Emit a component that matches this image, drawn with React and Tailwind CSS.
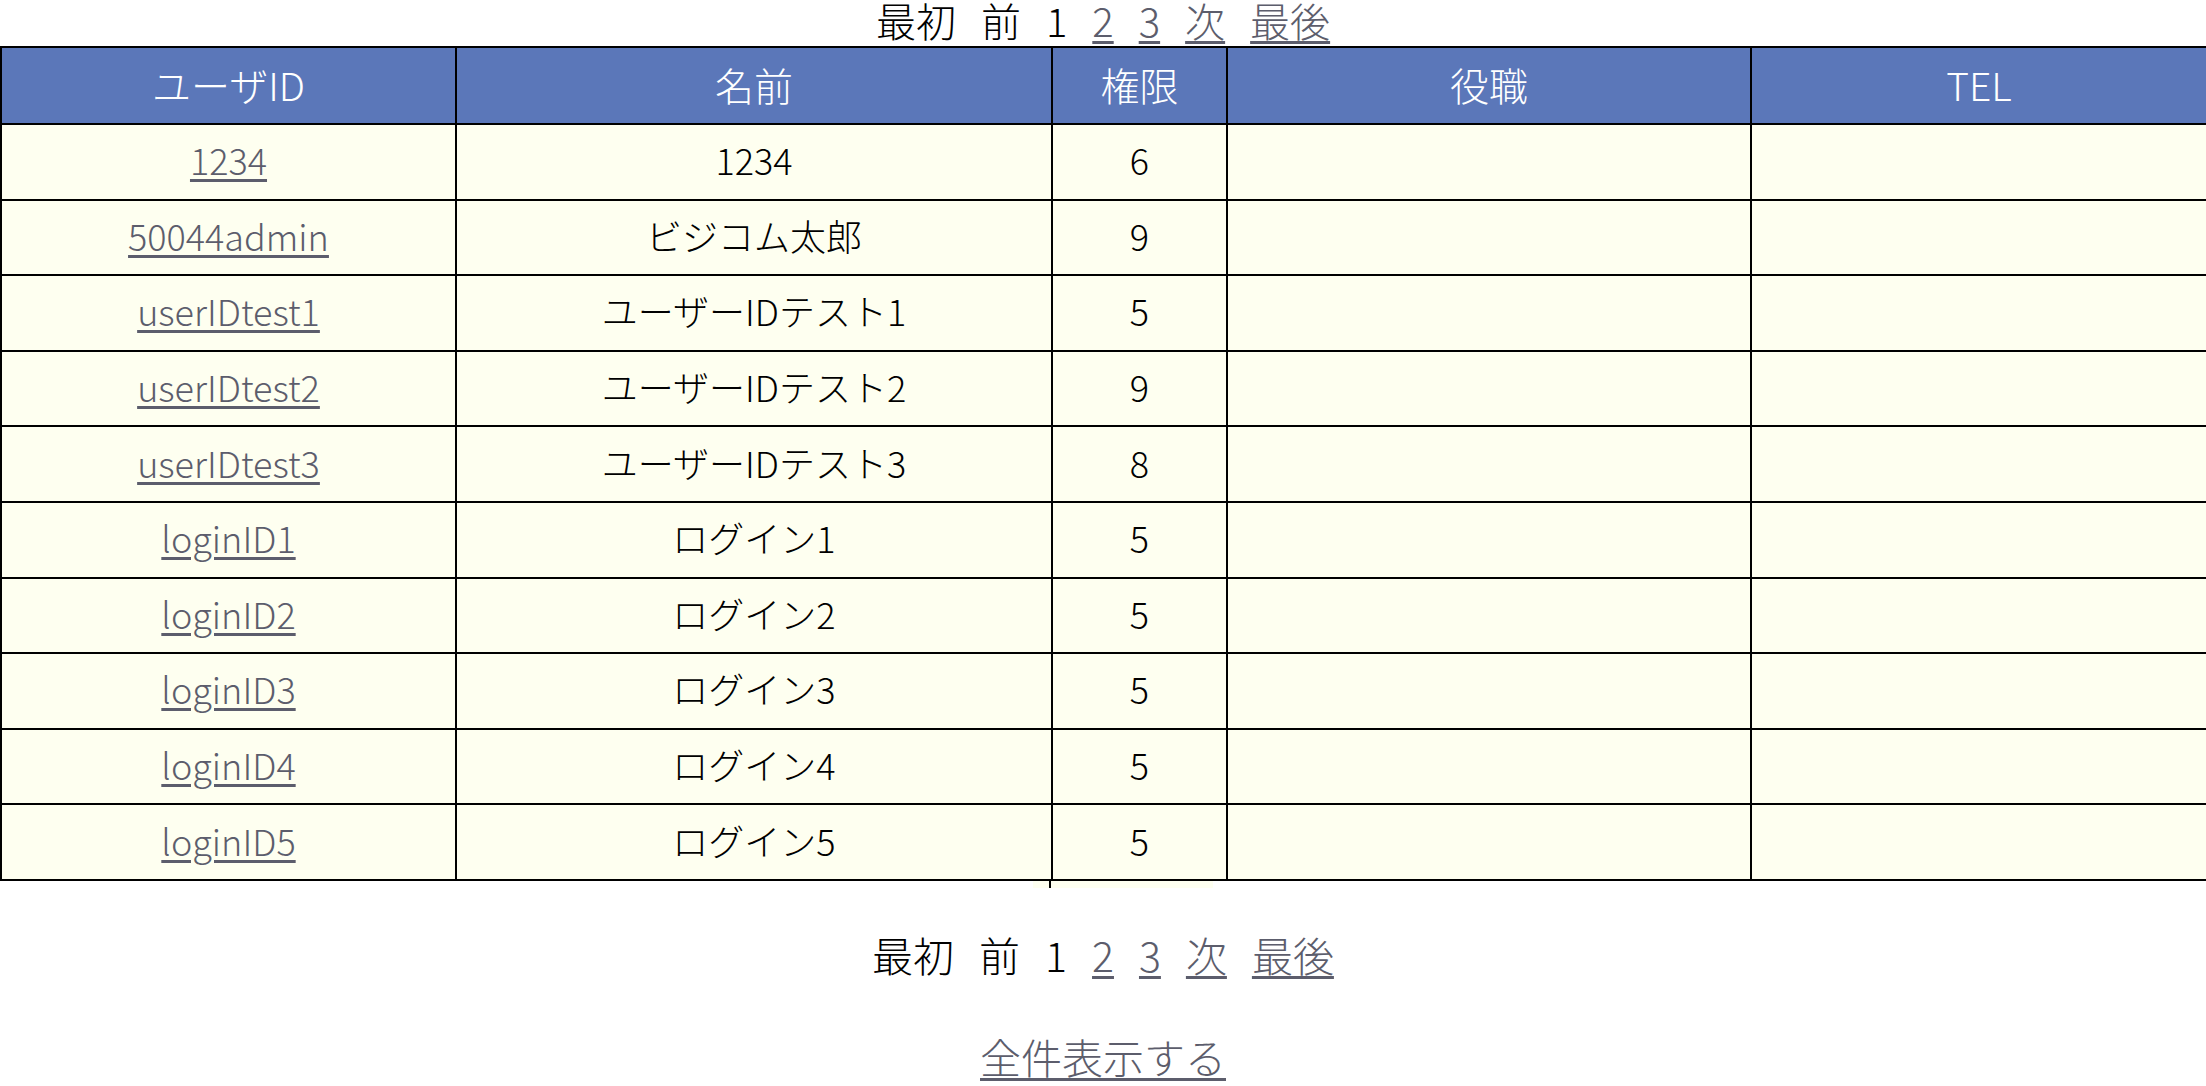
import React from 'react';

const users = [
  { id: '1234', name: '1234', level: '6' },
  { id: '50044admin', name: 'ビジコム太郎', level: '9' },
  { id: 'userIDtest1', name: 'ユーザーIDテスト1', level: '5' },
  { id: 'userIDtest2', name: 'ユーザーIDテスト2', level: '9' },
  { id: 'userIDtest3', name: 'ユーザーIDテスト3', level: '8' },
  { id: 'loginID1', name: 'ログイン1', level: '5' },
  { id: 'loginID2', name: 'ログイン2', level: '5' },
  { id: 'loginID3', name: 'ログイン3', level: '5' },
  { id: 'loginID4', name: 'ログイン4', level: '5' },
  { id: 'loginID5', name: 'ログイン5', level: '5' },
];

const link = 'text-[#5c5d6c] underline decoration-[3px] underline-offset-[4px]';

function Pager({ className }) {
  return (
    <div className={`flex justify-center items-center gap-[25px] text-black ${className}`}>
      <span>最初</span>
      <span>前</span>
      <span>1</span>
      <a href="#" className={link}>2</a>
      <a href="#" className={link}>3</a>
      <a href="#" className={link}>次</a>
      <a href="#" className={link}>最後</a>
    </div>
  );
}

export default function App() {
  return (
    <div className="w-[2206px] bg-white font-['Noto_Sans_CJK_JP','Noto_Sans',sans-serif] font-light">
      <div className="h-[46px]">
        <Pager className="text-[40px] leading-[40px]" />
      </div>

      <table className="w-full border-collapse table-fixed">
        <colgroup>
          <col className="w-[455px]" />
          <col className="w-[596px]" />
          <col className="w-[175px]" />
          <col className="w-[524px]" />
          <col className="w-[456px]" />
        </colgroup>
        <thead>
          <tr className="h-[77px] bg-[#5b77b9] text-white text-[39px]">
            <th className="border-2 border-black font-light pb-[3px]">ユーザID</th>
            <th className="border-2 border-black font-light pb-[3px]">名前</th>
            <th className="border-2 border-black font-light pb-[3px]">権限</th>
            <th className="border-2 border-black font-light pb-[3px]">役職</th>
            <th className="border-2 border-black font-light pb-[3px]">TEL</th>
          </tr>
        </thead>
        <tbody>
          {users.map((u) => (
            <tr key={u.id} className="h-[75.6px] bg-[#fefff0] text-[36px] text-black text-center">
              <td className="border-2 border-black pb-[5px]">
                <a href="#" className={link}>{u.id}</a>
              </td>
              <td className="border-2 border-black pb-[5px]">{u.name}</td>
              <td className="border-2 border-black pb-[5px]">{u.level}</td>
              <td className="border-2 border-black"></td>
              <td className="border-2 border-black"></td>
            </tr>
          ))}
        </tbody>
      </table>

      <div className="ml-[1033px] w-[180px] h-[7px] bg-[#fefff0] flex">
        <div className="ml-[16px] w-[2px] h-full bg-black" />
      </div>

      <div className="pt-[44px]">
        <Pager className="text-[41px] leading-[44px]" />
      </div>

      <div className="pt-[58px] pb-[8px] flex justify-center text-[41px] leading-[44px]">
        <a href="#" className={link}>全件表示する</a>
      </div>
    </div>
  );
}
